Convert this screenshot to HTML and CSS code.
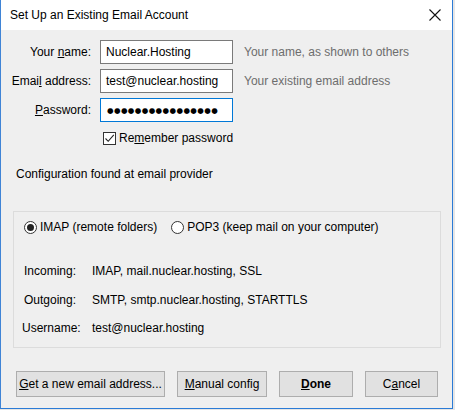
FILE: index.html
```html
<!DOCTYPE html>
<html>
<head>
<meta charset="utf-8">
<link rel="stylesheet" href="styles.css">
</head>
<body>
<div class="window">
  <div class="titlebar">
    <span class="title">Set Up an Existing Email Account</span>
    <svg class="close" width="12" height="12" viewBox="0 0 12 12"><path d="M0.5 0.5 L11.5 11.5 M11.5 0.5 L0.5 11.5" stroke="#111" stroke-width="1.1" fill="none"/></svg>
  </div>
  <div class="content">
    <div class="form">
      <label class="lbl">Your <u>n</u>ame:</label>
      <div class="input">Nuclear.Hosting</div>
      <span class="hint">Your name, as shown to others</span>

      <label class="lbl">Emai<u>l</u> address:</label>
      <div class="input">test@nuclear.hosting</div>
      <span class="hint">Your existing email address</span>

      <label class="lbl"><u>P</u>assword:</label>
      <div class="input focus"><span class="dots">●●●●●●●●●●●●●●●●</span></div>
      <span></span>

      <span></span>
      <div class="remember">
        <span class="checkbox"><svg width="11" height="11" viewBox="0 0 11 11"><path d="M1.5 5.5 L4.2 8.3 L9.8 1.8" stroke="#222" stroke-width="1.1" fill="none"/></svg></span>
        <span>Re<u>m</u>ember password</span>
      </div>
      <span></span>
    </div>

    <div class="found">Configuration found at email provider</div>

    <div class="group">
      <div class="radios">
        <span class="radio checked"><span class="dot"></span></span>
        <span class="rtext">IMAP (remote folders)</span>
        <span class="radio"></span>
        <span class="rtext">POP3 (keep mail on your computer)</span>
      </div>
      <div class="info">
        <span class="ilbl">Incoming:</span><span>IMAP, mail.nuclear.hosting, SSL</span>
        <span class="ilbl">Outgoing:</span><span>SMTP, smtp.nuclear.hosting, STARTTLS</span>
        <span class="ilbl user">Username:</span><span>test@nuclear.hosting</span>
      </div>
    </div>

    <div class="buttons">
      <button class="btn b1"><u>G</u>et a new email address...</button>
      <button class="btn b2"><u>M</u>anual config</button>
      <button class="btn b3 bold"><u>D</u>one</button>
      <button class="btn b4">C<u>a</u>ncel</button>
    </div>
  </div>
</div>
</body>
</html>
```

FILE: styles.css
```css
html, body {
  margin: 0;
  padding: 0;
}
body {
  background: #e6e6e6;
  font-family: "Liberation Sans", Arial, sans-serif;
  font-size: 12px;
  color: #000;
  width: 455px;
  height: 410px;
  overflow: hidden;
}
.window {
  width: 451px;
  height: 408px;
  border-left: 1px solid #3f84d6;
  border-right: 1px solid #2b7bd6;
  border-bottom: 1px solid #2b7bd6;
  background: #efefef;
  display: flex;
  flex-direction: column;
}
.titlebar {
  height: 30px;
  background: #fff;
  display: flex;
  align-items: center;
  padding: 0 11px 0 9px;
  justify-content: space-between;
}
.title {
  font-size: 12px;
  margin-top: -1px;
}
.close {
  margin-top: -1px;
}
.content {
  flex: 1;
  display: flex;
  flex-direction: column;
}
.form {
  display: grid;
  grid-template-columns: 90px 133px auto;
  column-gap: 9px;
  row-gap: 5px;
  margin-top: 10px;
  align-items: center;
}
.lbl {
  text-align: right;
  white-space: nowrap;
}
.input {
  height: 22px;
  border: 1px solid #7a7a7a;
  background: #fff;
  display: flex;
  align-items: center;
  padding-left: 5px;
  white-space: nowrap;
  overflow: hidden;
}
.input.focus {
  border-color: #0078d7;
}
.dots {
  font-family: "DejaVu Sans", sans-serif;
  font-size: 7.5px;
  letter-spacing: 0.4px;
  padding-left: 1px;
}
.hint {
  color: #6d6d6d;
  margin-left: 2px;
  white-space: nowrap;
}
.remember {
  display: flex;
  align-items: center;
  gap: 3px;
  margin-left: 3px;
  margin-top: 4px;
  white-space: nowrap;
}
.checkbox {
  width: 11px;
  height: 11px;
  border: 1px solid #333;
  background: #fff;
  display: flex;
}
.found {
  margin: 22px 0 0 15px;
}
.group {
  margin: 30px 0 0 12px;
  width: 426px;
  height: 135px;
  border: 1px solid #dcdcdc;
}
.radios {
  display: flex;
  align-items: center;
  margin: 8px 0 0 10px;
  white-space: nowrap;
}
.radio {
  width: 11px;
  height: 11px;
  border: 1px solid #333;
  border-radius: 50%;
  background: #fff;
  display: flex;
  align-items: center;
  justify-content: center;
}
.radio .dot {
  width: 7px;
  height: 7px;
  border-radius: 50%;
  background: #222;
}
.rtext {
  margin-left: 3px;
  margin-right: 14px;
}
.info {
  display: grid;
  grid-template-columns: 68px auto;
  row-gap: 11px;
  margin: 29px 0 0 10px;
  line-height: 17.5px;
}
.ilbl.user {
  margin-left: -2px;
}
.buttons {
  display: flex;
  margin: 23px 0 0 15px;
  gap: 12px;
}
.btn {
  font-family: inherit;
  font-size: 12px;
  height: 26px;
  background: #e1e1e1;
  border: 1px solid #adadad;
  padding: 0;
  color: #000;
  white-space: nowrap;
}
.b1 { width: 149px; }
.b2 { width: 90px; }
.b3 { width: 74px; }
.b4 { width: 73px; }
.bold { font-weight: bold; }
```
